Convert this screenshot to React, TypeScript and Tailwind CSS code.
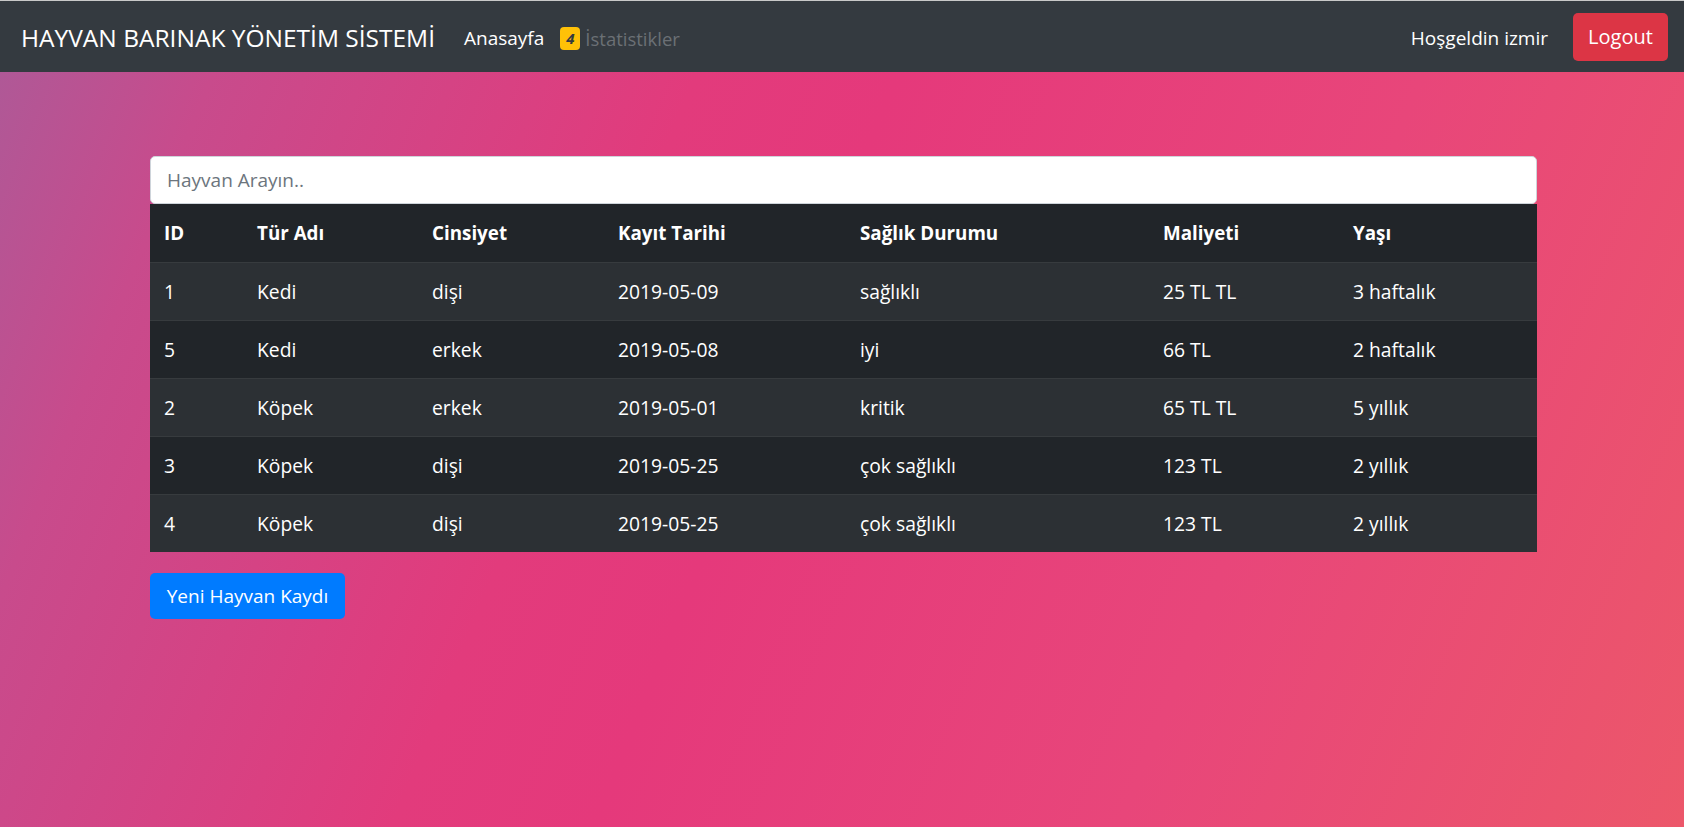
import React from 'react';

const rows = [
  { id: 1, tur: 'Kedi', cins: 'dişi', tarih: '2019-05-09', saglik: 'sağlıklı', maliyet: '25 TL TL', yas: '3 haftalık' },
  { id: 5, tur: 'Kedi', cins: 'erkek', tarih: '2019-05-08', saglik: 'iyi', maliyet: '66 TL', yas: '2 haftalık' },
  { id: 2, tur: 'Köpek', cins: 'erkek', tarih: '2019-05-01', saglik: 'kritik', maliyet: '65 TL TL', yas: '5 yıllık' },
  { id: 3, tur: 'Köpek', cins: 'dişi', tarih: '2019-05-25', saglik: 'çok sağlıklı', maliyet: '123 TL', yas: '2 yıllık' },
  { id: 4, tur: 'Köpek', cins: 'dişi', tarih: '2019-05-25', saglik: 'çok sağlıklı', maliyet: '123 TL', yas: '2 yıllık' },
];

const Navbar = () => (
  <nav className="flex h-[72px] items-center border-t border-[#c9c9c9] bg-[#343a40] pl-[21px] pr-4">
    <div className="mt-[4px] flex items-center">
      <span className="text-[24.5px] leading-none text-white">HAYVAN BARINAK YÖNETİM SİSTEMİ</span>
      <a className="ml-[29px] text-[19px] text-white">Anasayfa</a>
      <span className="ml-[16px] flex h-[23px] w-[20px] items-center justify-center rounded-[4px] bg-[#ffc107] text-[15px] font-bold italic text-[#343a40]">
        4
      </span>
      <a className="ml-[5px] text-[18.5px] text-[#6b7075]">İstatistikler</a>
    </div>
    <div className="ml-auto flex items-center">
      <span className="mt-[3px] text-[19px] text-white">Hoşgeldin izmir</span>
      <button
        type="button"
        className="ml-[25px] h-[48px] w-[95px] rounded-[5px] bg-[#dc3545] text-[20px] text-white"
      >
        Logout
      </button>
    </div>
  </nav>
);

export default function App() {
  const cols = ['w-[93px]', 'w-[175px]', 'w-[186px]', 'w-[242px]', 'w-[303px]', 'w-[190px]', ''];
  const heads = ['ID', 'Tür Adı', 'Cinsiyet', 'Kayıt Tarihi', 'Sağlık Durumu', 'Maliyeti', 'Yaşı'];

  return (
    <div
      className="min-h-screen w-full bg-[linear-gradient(112deg,#ac5a98_0%,#c84b8c_12%,#e23b7c_36%,#e5397b_46%,#e8467a_72%,#ec576a_100%)]"
      style={{ fontFamily: '"Open Sans", "Noto Sans", sans-serif' }}
    >
      <Navbar />
      <main className="pl-[150px] pt-[84px]">
        <div className="w-[1387px]">
          <input
            type="text"
            placeholder="Hayvan Arayın.."
            className="block h-[48px] w-full rounded-[5px] border border-[#ced4da] bg-white px-4 text-[19px] text-[#495057] outline-none placeholder:text-[#6c757d]"
          />
          <table className="w-full table-fixed border-collapse text-left text-[19.3px] text-white">
            <thead>
              <tr className="h-[58px] bg-[#212529]">
                {heads.map((h, i) => (
                  <th key={h} className={`${cols[i]} px-[14px] text-[18.8px] font-bold`}>
                    {h}
                  </th>
                ))}
              </tr>
            </thead>
            <tbody>
              {rows.map((r, i) => (
                <tr
                  key={r.id}
                  className={`h-[58px] border-t border-[#373b3e] ${i % 2 === 0 ? 'bg-[#2c3034]' : 'bg-[#212529]'}`}
                >
                  <td className="px-[14px] pt-[3px]">{r.id}</td>
                  <td className="px-[14px] pt-[3px]">{r.tur}</td>
                  <td className="px-[14px] pt-[3px]">{r.cins}</td>
                  <td className="px-[14px] pt-[3px]">{r.tarih}</td>
                  <td className="px-[14px] pt-[3px]">{r.saglik}</td>
                  <td className="px-[14px] pt-[3px]">{r.maliyet}</td>
                  <td className="px-[14px] pt-[3px]">{r.yas}</td>
                </tr>
              ))}
            </tbody>
          </table>
          <button
            type="button"
            className="mt-[21px] h-[46px] w-[195px] rounded-[5px] bg-[#007bff] text-[19px] text-white"
          >
            Yeni Hayvan Kaydı
          </button>
        </div>
      </main>
    </div>
  );
}
